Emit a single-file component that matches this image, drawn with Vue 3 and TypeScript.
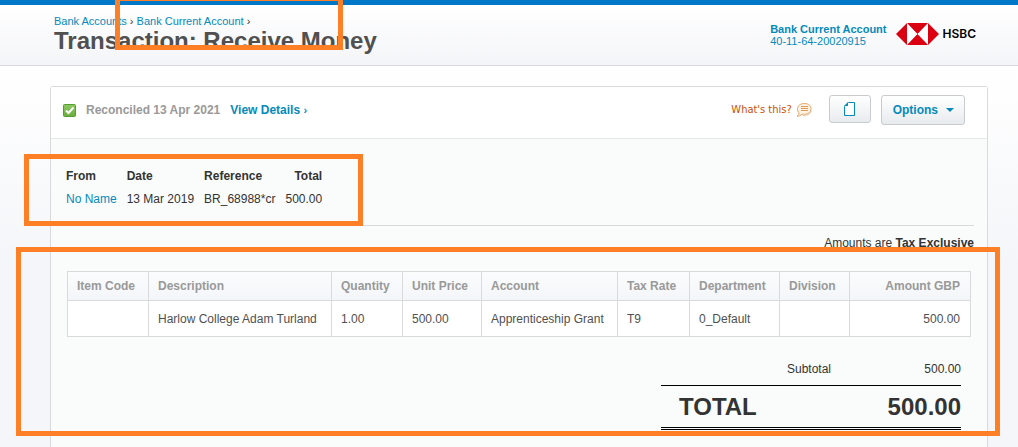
<script setup lang="ts">
interface Column {
  key: string
  label: string
}

const columns: Column[] = [
  { key: 'item', label: 'Item Code' },
  { key: 'description', label: 'Description' },
  { key: 'quantity', label: 'Quantity' },
  { key: 'price', label: 'Unit Price' },
  { key: 'account', label: 'Account' },
  { key: 'tax', label: 'Tax Rate' },
  { key: 'department', label: 'Department' },
  { key: 'division', label: 'Division' },
  { key: 'amount', label: 'Amount GBP' },
]

const lines: Record<string, string>[] = [
  {
    item: '',
    description: 'Harlow College Adam Turland',
    quantity: '1.00',
    price: '500.00',
    account: 'Apprenticeship Grant',
    tax: 'T9',
    department: '0_Default',
    division: '',
    amount: '500.00',
  },
]
</script>

<template>
  <div class="page">
    <header class="header">
      <div class="heading">
        <nav class="crumbs" aria-label="Breadcrumb">
          <a href="#">Bank Accounts</a> › <a href="#">Bank Current Account</a> ›
        </nav>
        <h1>Transaction: Receive Money</h1>
      </div>
      <div class="bank">
        <a href="#" class="bank-account"><strong>Bank Current Account</strong><span>40-11-64-20020915</span></a>
        <div class="bank-logo">
          <svg width="43" height="22" viewBox="0 0 43 22" aria-hidden="true">
            <path d="M11 0H32V22H11Z" fill="#fff" />
            <path d="M0 11L11 0V22ZM43 11L32 0V22ZM11 0H32L21.500 11ZM11 22H32L21.500 11Z" fill="#db0011" />
          </svg>
          <span>HSBC</span>
        </div>
      </div>
    </header>

    <main class="card">
      <div class="toolbar">
        <svg class="tick" width="13" height="13" viewBox="0 0 13 13" aria-hidden="true">
          <defs>
            <linearGradient id="tick-fill" x1="0" y1="0" x2="0" y2="1">
              <stop offset="0" stop-color="#8cc863" />
              <stop offset="1" stop-color="#6aae3d" />
            </linearGradient>
          </defs>
          <rect x="0.500" y="0.500" width="12" height="12" rx="1" fill="url(#tick-fill)" stroke="#579b35" />
          <path d="M3 6.500L5.500 9L10.500 3.500" fill="none" stroke="#fff" stroke-width="2" />
        </svg>
        <span class="status">Reconciled 13 Apr 2021</span>
        <a href="#" class="details">View Details <small>›</small></a>
        <a href="#" class="help">
          What's this?
          <svg width="16" height="16" viewBox="0 0 16 16" aria-hidden="true">
            <path d="M8.500 1.500C12.500 1.500 15 3.700 15 6.800C15 10 12.300 12.300 8.500 12.300C7.600 12.300 6.700 12.200 6 12C4.800 13.500 3 14.300 1 14.300C2.200 13.300 3 12.300 3 10.700C2 9.700 1.500 8.300 1.500 6.800C1.500 3.700 4.500 1.500 8.500 1.500Z" fill="#fff3e3" stroke="#e5a566" />
            <path d="M5 4.500H12M5 6.500H12M5 8.500H12" stroke="#e09a58" />
            <path d="M6.500 13.500C10.500 14 14 12.500 15.500 9" fill="none" stroke="#e3c9ae" />
          </svg>
        </a>
        <button type="button" class="button file" aria-label="Files">
          <svg width="11" height="14" viewBox="0 0 11 14" aria-hidden="true">
            <path d="M4.500 0.500H10.500V13.500H0.500V4.500Z" fill="#fff" stroke="#048abb" />
            <path d="M4 0V4H0Z" fill="#048abb" />
          </svg>
        </button>
        <button type="button" class="button options">
          Options
          <svg width="8" height="4" viewBox="0 0 8 4" aria-hidden="true"><path d="M0 0H8L4 4Z" fill="#048abb" /></svg>
        </button>
      </div>

      <div class="body">
        <section class="overview">
          <table class="summary">
            <thead>
              <tr><th>From</th><th>Date</th><th>Reference</th><th>Total</th></tr>
            </thead>
            <tbody>
              <tr><td><a href="#">No Name</a></td><td>13 Mar 2019</td><td>BR_68988*cr</td><td>500.00</td></tr>
            </tbody>
          </table>
        </section>

        <p class="tax-note">Amounts are <strong>Tax Exclusive</strong></p>

        <table class="lines">
          <colgroup>
            <col v-for="column in columns" :key="column.key" :class="column.key">
          </colgroup>
          <thead>
            <tr><th v-for="column in columns" :key="column.key">{{ column.label }}</th></tr>
          </thead>
          <tbody>
            <tr v-for="(line, index) in lines" :key="index">
              <td v-for="column in columns" :key="column.key">{{ line[column.key] }}</td>
            </tr>
          </tbody>
        </table>

        <dl class="totals">
          <div class="subtotal"><dt>Subtotal</dt><dd>500.00</dd></div>
          <div class="total"><dt>TOTAL</dt><dd>500.00</dd></div>
        </dl>
      </div>
    </main>

    <div class="mark mark-title"></div>
    <div class="mark mark-summary"></div>
    <div class="mark mark-lines"></div>
  </div>
</template>

<style>
body {
  margin: 0;
}
</style>

<style scoped>
.page {
  position: relative;
  display: flex;
  flex-direction: column;
  box-sizing: border-box;
  min-height: 100vh;
  overflow: hidden;
  background: linear-gradient(#fff 66px, #f5f6f9 260px);
  color: #333;
  font: 12px/16px Arial, "Liberation Sans", sans-serif;
}

a {
  color: #048abb;
  text-decoration: none;
}

.header {
  display: flex;
  justify-content: space-between;
  box-sizing: border-box;
  height: 66px;
  padding: 0 42px 0 54px;
  border-top: 5px solid #0078c8;
  border-bottom: 1px solid #d9dadb;
  background: linear-gradient(#fff, #f4f5f8);
}

.crumbs {
  padding-top: 10px;
  font-size: 11px;
  line-height: 12px;
}

h1 {
  margin: 0;
  color: #505050;
  font-size: 24px;
  line-height: 28px;
}

.bank {
  display: flex;
  align-items: flex-start;
  gap: 10px;
  padding-top: 18px;
}

.bank-account {
  display: flex;
  flex-direction: column;
  font-size: 11px;
  line-height: 12px;
}

.bank-logo {
  display: flex;
  align-items: center;
  gap: 3px;
  color: #000;
  font: 600 12px/22px Inter, Arial, sans-serif;
}

.card {
  flex: 1;
  margin: 20px 30px 0 50px;
  border: 1px solid #d9dadb;
  border-bottom: 0;
  border-radius: 3px 3px 0 0;
  background: #fafcfb;
}

.toolbar {
  display: flex;
  align-items: center;
  height: 51px;
  padding: 0 22px 0 12px;
  border-bottom: 1px solid #e6e8e8;
  background: #fff;
}

.tick {
  margin: 0 10px 5px 0;
}

.status,
.details {
  padding-bottom: 5px;
  color: #999;
  font-weight: bold;
}

.details {
  margin-left: 10px;
  color: #048abb;
}

.details small {
  font-size: 11px;
}

.help {
  display: flex;
  align-items: center;
  gap: 4px;
  margin: 0 17px 5px auto;
  color: #c8500a;
  font: 11px/16px "DejaVu Sans Condensed", "Open Sans", sans-serif;
}

.button {
  display: flex;
  align-items: center;
  justify-content: center;
  box-sizing: border-box;
  margin: 0 0 8px;
  border: 1px solid #c8cccf;
  border-radius: 3px;
  background: linear-gradient(#fff, #e8ebee);
  color: #048abb;
  font: bold 12px/16px Arial, "Liberation Sans", sans-serif;
}

.file {
  width: 42px;
  height: 28px;
  padding: 0;
}

.options {
  gap: 8px;
  height: 30px;
  margin: 0 0 6px 10px;
  padding: 0 10px 0 11px;
}

.body {
  padding: 0 13px 0 15px;
}

.overview {
  padding: 25px 0 15px;
  border-bottom: 1px solid #d9dadb;
}

.summary {
  border-collapse: collapse;
}

.summary th,
.summary td {
  height: 23px;
  padding: 0 10px 0 0;
  text-align: left;
}

.summary th:last-child,
.summary td:last-child {
  text-align: right;
}

.tax-note {
  margin: 9px 0 20px;
  text-align: right;
}

.lines {
  width: calc(100% - 4px);
  margin: 0 3px 0 1px;
  border-collapse: collapse;
  table-layout: fixed;
  background: #fff;
}

.lines th,
.lines td {
  padding: 0 9px;
  border: 1px solid #d9dadb;
  text-align: left;
}

.lines th {
  height: 28px;
  color: #999;
}

.lines thead {
  background: linear-gradient(#fbfcfc, #f3f5f9);
}

.lines td {
  height: 35px;
  color: #505050;
}

.lines th:last-child,
.lines td:last-child {
  padding-right: 10px;
  text-align: right;
}

.item { width: 81px; }
.quantity { width: 71px; }
.price { width: 79px; }
.account { width: 136px; }
.tax { width: 72px; }
.department { width: 90px; }
.division { width: 70px; }
.amount { width: 121px; }

.totals {
  width: 300px;
  margin: 24px 13px 0 auto;
}

.totals div {
  display: flex;
  justify-content: space-between;
}

.totals dd {
  margin: 0;
}

.subtotal {
  padding-bottom: 8px;
}

.subtotal dt {
  width: 170px;
  text-align: right;
}

.total {
  padding: 6px 0 5px 18px;
  border-top: 1px solid #000;
  border-bottom: 3px double #000;
  font-size: 24px;
  font-weight: bold;
  line-height: 30px;
}

.mark {
  position: absolute;
  box-sizing: border-box;
  border: 5px solid #ff7f27;
  pointer-events: none;
}

.mark-title {
  top: -4px;
  left: 115px;
  width: 228px;
  height: 54px;
}

.mark-summary {
  top: 154px;
  left: 24px;
  width: 339px;
  height: 72px;
}

.mark-lines {
  top: 247px;
  right: 18px;
  left: 16px;
  height: 189px;
}
</style>
